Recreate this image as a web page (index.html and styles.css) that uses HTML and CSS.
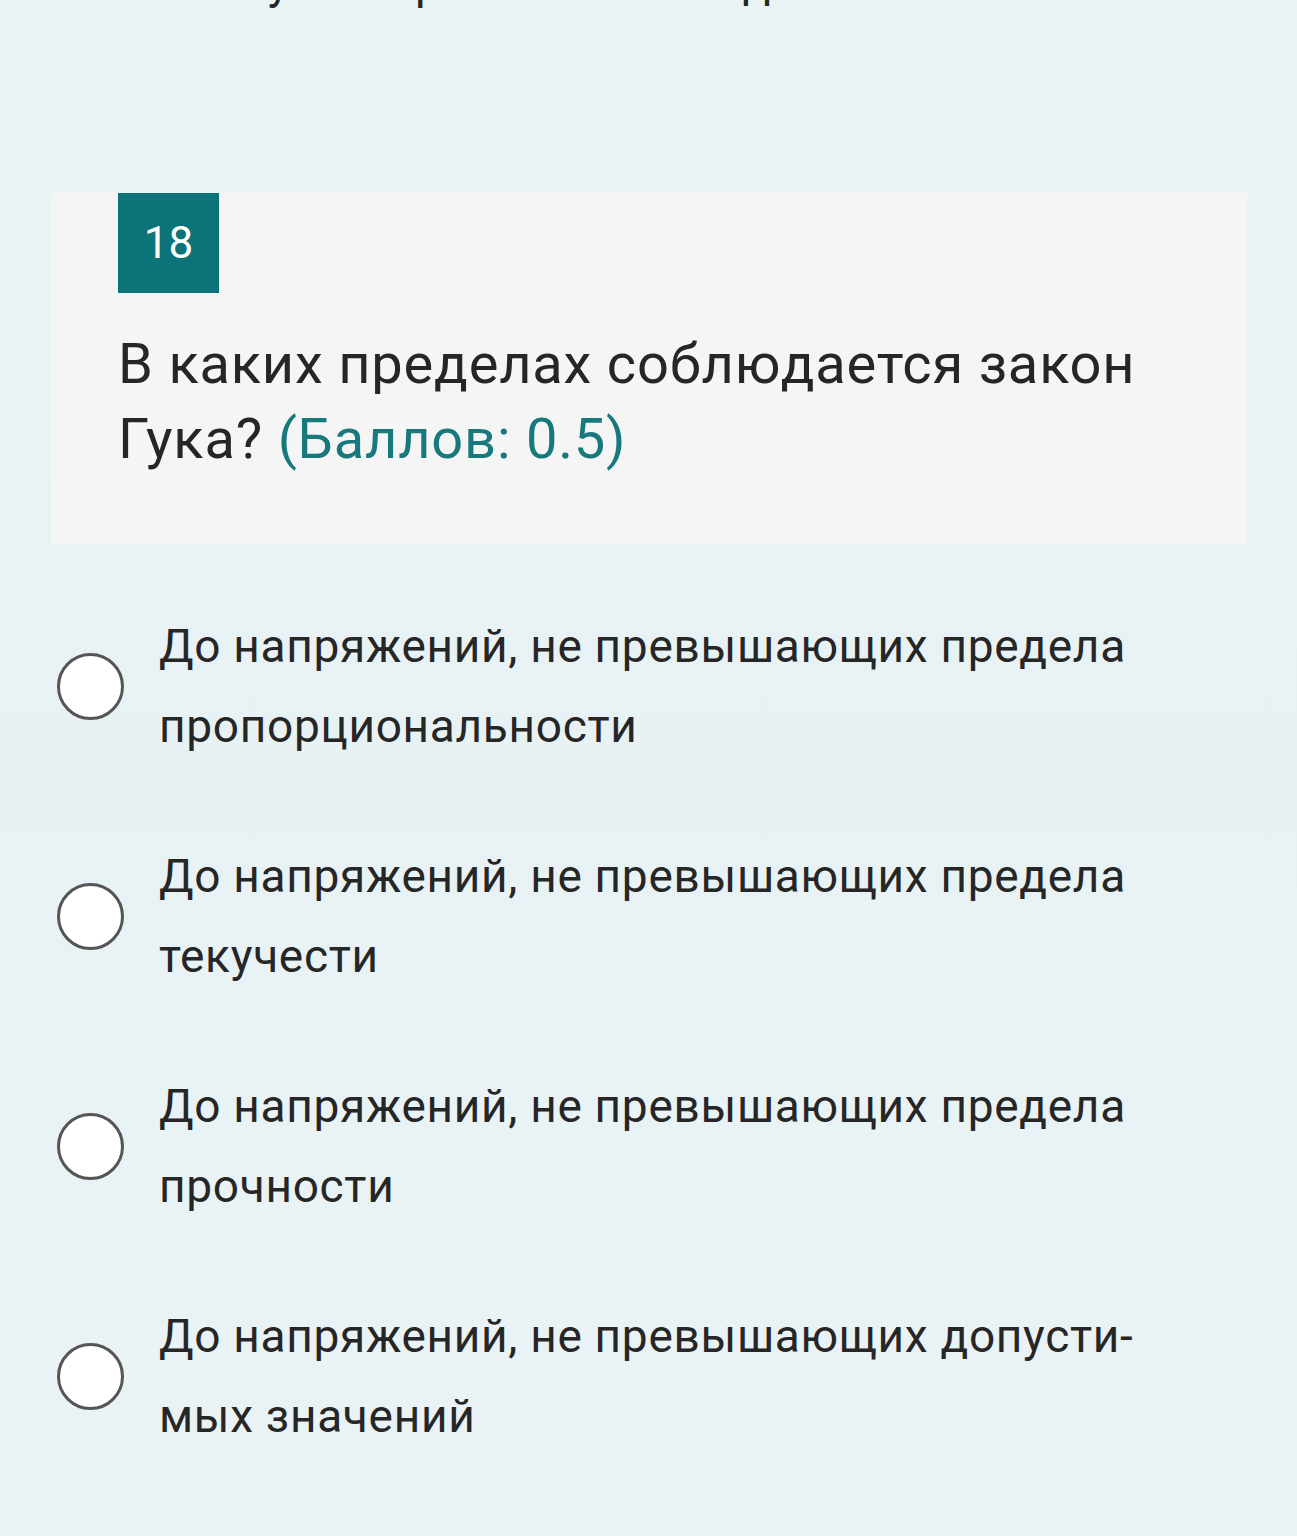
FILE: index.html
```html
<!DOCTYPE html>
<html lang="ru">
<head>
<meta charset="utf-8">
<title>Вопрос 18</title>
<link rel="stylesheet" href="styles.css">
</head>
<body>
<div class="page">
  <div class="prev-tail">Если у всех рама не выше до</div>

  <section class="card">
    <div class="badge">18</div>
    <h2 class="question">В каких пределах соблюдается закон Гука? <span class="points">(Баллов: 0.5)</span></h2>
  </section>

  <ul class="options">
    <li class="option">
      <span class="radio"></span>
      <span class="label">До напряжений, не превышающих предела пропорциональности</span>
    </li>
    <li class="option">
      <span class="radio"></span>
      <span class="label">До напряжений, не превышающих предела текучести</span>
    </li>
    <li class="option">
      <span class="radio"></span>
      <span class="label">До напряжений, не превышающих предела прочности</span>
    </li>
    <li class="option">
      <span class="radio"></span>
      <span class="label">До напряжений, не превышающих допусти-<br>мых значений</span>
    </li>
  </ul>
</div>
</body>
</html>
```

FILE: styles.css
```css
html, body {
  margin: 0;
  padding: 0;
}

body {
  font-family: Roboto, "Noto Sans", "Liberation Sans", sans-serif;
  color: #262626;
  background: linear-gradient(180deg, #eaf4f5 0%, #e8f2f5 50%, #eaf2f5 100%);
  min-height: 1536px;
  overflow: hidden;
}

.page {
  padding: 0 50px 0 51px;
}

.prev-tail {
  font-size: 46px;
  letter-spacing: 0.7px;
  line-height: 80px;
  height: 80px;
  margin-top: -57px;
  padding-left: 99px;
  white-space: nowrap;
  color: #262626;
}

.card {
  margin-top: 170px;
  background: #f5f5f5;
  padding: 0 67px 67px 67px;
}

.badge {
  width: 101px;
  height: 100px;
  background: #0c7478;
  color: #ffffff;
  font-size: 44px;
  display: flex;
  align-items: center;
  justify-content: center;
}

.question {
  margin: 34px 0 0 0;
  font-size: 56px;
  font-weight: 400;
  letter-spacing: 0.8px;
  line-height: 75px;
  color: #262626;
}

.points {
  color: #17797c;
}

.options {
  list-style: none;
  margin: 62px 0 0 0;
  padding: 0 0 0 6px;
  display: flex;
  flex-direction: column;
  gap: 70px;
}

.option {
  display: flex;
  align-items: center;
  gap: 35px;
}

.radio {
  flex: none;
  width: 61px;
  height: 61px;
  border: 3px solid #555555;
  border-radius: 50%;
  background: #ffffff;
}

.label {
  font-size: 46px;
  letter-spacing: 0.7px;
  line-height: 80px;
  max-width: 1020px;
  color: #262626;
}
```
